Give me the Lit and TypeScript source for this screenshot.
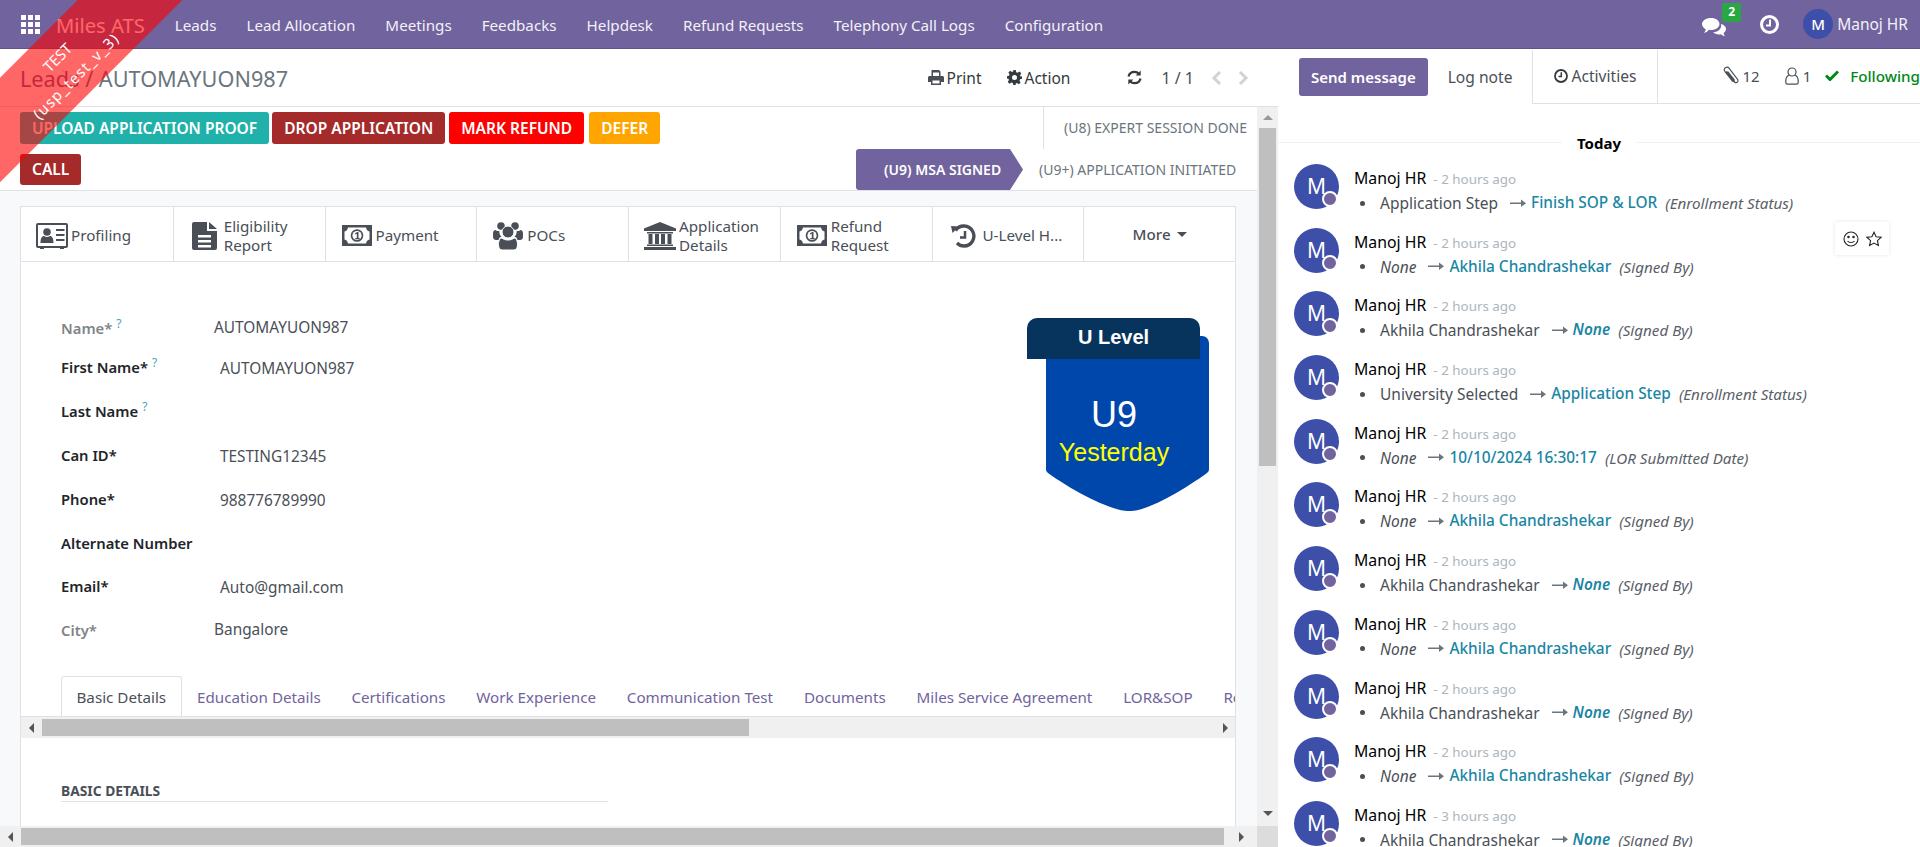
import { LitElement, html, css } from 'lit';
import { customElement } from 'lit/decorators.js';

const NAV = ['Leads', 'Lead Allocation', 'Meetings', 'Feedbacks', 'Helpdesk', 'Refund Requests', 'Telephony Call Logs', 'Configuration'];
const TABS = ['Education Details', 'Certifications', 'Work Experience', 'Communication Test', 'Documents', 'Miles Service Agreement', 'LOR&SOP', 'Resume'];

const moneyIcon = html`<svg width="30" height="21" viewBox="0 0 30 21"><rect width="30" height="21" fill="#4a4f57"/><path fill="#fff" d="M6 2.500H24c.5 2.500 1.500 3.500 3.500 4V14.500c-2 .5-3 1.500-3.500 4H6c-.5-2.500-1.500-3.500-3.500-4V6.500c2-.5 3-1.500 3.500-4z"/><circle cx="15" cy="10.500" r="6.300" fill="#4a4f57"/><circle cx="15" cy="10.500" r="4.600" fill="#fff"/><path fill="#4a4f57" d="M13 8.300l2.300-1.300h1.200v6h1.200v1.200h-4.400V13h1.500V8.700L13.300 9.400z"/></svg>`;

const ico = {
  apps: html`<svg width="19" height="19" viewBox="0 0 19 19" fill="#fff"><rect x="0" y="0" width="5" height="5"/><rect x="7" y="0" width="5" height="5"/><rect x="14" y="0" width="5" height="5"/><rect x="0" y="7" width="5" height="5"/><rect x="7" y="7" width="5" height="5"/><rect x="14" y="7" width="5" height="5"/><rect x="0" y="14" width="5" height="5"/><rect x="7" y="14" width="5" height="5"/><rect x="14" y="14" width="5" height="5"/></svg>`,
  chat: html`<svg width="24" height="22" viewBox="0 0 24 22" fill="#fff"><path d="M9 3c5 0 8.500 2.700 8.500 6s-3.500 6-8.500 6c-.8 0-1.500 0-2.200-.2C5.500 17 3.800 17.600 2 18c.8-1 1.500-2.200 1.700-3.800C1.500 13.100 0 11.200 0 9c0-3.300 4-6 9-6z"/><path d="M19 9c3 .8 5 2.700 5 5 0 1.600-1 3-2.500 4 .2 1.300.8 2.300 1.500 3.200-1.700-.3-3.100-1-4.200-2-.6.1-1.200.2-1.800.2-2.400 0-4.500-.8-5.800-2.100 5.300-.1 8.800-3.800 7.800-8.300z"/></svg>`,
  clock: html`<svg width="19" height="19" viewBox="0 0 19 19" fill="none" stroke="#fff"><circle cx="9.500" cy="9.500" r="8" stroke-width="3"/><path d="M10 4.500V10.500H6" stroke-width="2"/></svg>`,
  print: html`<svg width="16" height="15" viewBox="0 0 16 15" fill="#4a4f57"><path d="M3.500 0H11l1.500 1.500V6H11V2.500H5V6H3.500z"/><path d="M1.500 6h13c.8 0 1.500.7 1.500 1.500V12h-3v3H3v-3H0V7.500C0 6.700.7 6 1.500 6zM4.500 10.500v3h7v-3z" fill-rule="evenodd"/></svg>`,
  gear: html`<svg width="15" height="15" viewBox="0 0 24 24" fill="#343a40"><path fill-rule="evenodd" d="M10 0h4l.7 3.400 2.300 1 3-1.900 2.800 2.800-1.900 3 1 2.300L24 10v4l-3.100.7-1 2.300 1.900 3-2.800 2.800-3-1.900-2.300 1L14 24h-4l-.7-3.100-2.300-1-3 1.900-2.800-2.800 1.900-3-1-2.300L0 14v-4l3.100-.7 1-2.300-1.900-3 2.800-2.800 3 1.900 2.300-1zM12 8a4 4 0 100 8 4 4 0 000-8z"/></svg>`,
  refresh: html`<svg width="15" height="15" viewBox="0 0 15 15" fill="none" stroke="#343a40" stroke-width="2.200"><path d="M1.500 6.500C2.200 3.500 4.600 1.800 7.500 1.800c1.900 0 3.400.8 4.500 2"/><path d="M13.500 8.500c-.7 3-3.100 4.700-6 4.700-1.900 0-3.400-.8-4.500-2"/><path d="M13.700 0.500V5.500H8.700z" fill="#343a40" stroke="none"/><path d="M1.300 14.500V9.500H6.300z" fill="#343a40" stroke="none"/></svg>`,
  left: html`<svg width="11" height="16" viewBox="0 0 11 16" fill="none" stroke="#cfd2d6" stroke-width="3"><path d="M9 2L3 8l6 6"/></svg>`,
  right: html`<svg width="11" height="16" viewBox="0 0 11 16" fill="none" stroke="#cfd2d6" stroke-width="3"><path d="M2 2l6 6-6 6"/></svg>`,
  card: html`<svg width="32" height="26" viewBox="0 0 32 26" fill="#4a4f57"><path fill-rule="evenodd" d="M2 0h28a2 2 0 012 2v21a2 2 0 01-2 2h-2v1h-4v-1H8v1H4v-1H2a2 2 0 01-2-2V2a2 2 0 012-2zm0 2v21h28V2z"/><circle cx="11" cy="9" r="3.800"/><path d="M4.500 20c0-5 1.500-7 3.500-7 1 .8 2 1.100 3 1.100s2-.3 3-1.100c2 0 3.500 2 3.500 7z"/><rect x="20" y="6" width="8.500" height="2"/><rect x="20" y="11" width="8.500" height="2"/><rect x="20" y="16" width="8.500" height="2"/></svg>`,
  file: html`<svg width="25" height="28" viewBox="0 0 25 28" fill="#4a4f57"><path fill-rule="evenodd" d="M2 0h13v9h10v17a2 2 0 01-2 2H2a2 2 0 01-2-2V2a2 2 0 012-2zM6 13v2.500h13V13zm0 5v2.500h13V18zm0 5v2.500h13V23z"/><path d="M17 0l8 7h-8z"/></svg>`,
  money: moneyIcon,
  group: html`<svg width="30" height="28" viewBox="0 0 30 28" fill="#4a4f57"><circle cx="8" cy="4" r="3.800"/><circle cx="22" cy="4" r="3.800"/><path d="M0 11.500c0-2 1-3.500 2.500-3.500 1 .8 2.300 1.300 4 1.200-.4 2 .4 4 2 5.600C7 15 6 16 5.500 18H3c-2 0-3-1.500-3-3.500z"/><path d="M30 11.500c0-2-1-3.500-2.500-3.500-1 .8-2.300 1.300-4 1.200.4 2-.4 4-2 5.600 1.500.2 2.500 1.200 3 3.200H27c2 0 3-1.500 3-3.500z"/><circle cx="15" cy="10" r="6" stroke="#fff"/><path stroke="#fff" d="M9 16c1.600 1.500 3.600 2 6 2s4.400-.5 6-2c2.500 0 3.500 3 3.500 7 0 3-1.500 5-4 5h-11c-2.500 0-4-2-4-5 0-4 1-7 3.500-7z"/></svg>`,
  bank: html`<svg width="32" height="28" viewBox="0 0 32 28" fill="#4a4f57"><path d="M16 0l16 6.500V9H0V6.500z"/><rect x="3" y="10" width="26" height="1.500"/><rect x="4.500" y="12" width="4" height="10"/><rect x="11" y="12" width="4" height="10"/><rect x="17" y="12" width="4" height="10"/><rect x="23.500" y="12" width="4" height="10"/><rect x="3" y="22.500" width="26" height="1.500"/><rect x="0" y="25" width="32" height="3"/></svg>`,
  history: html`<svg width="25" height="24" viewBox="0 0 25 24" fill="none" stroke="#4a4f57"><path d="M4.500 6.500A10 10 0 1113 22c-3 0-5-1-7-3" stroke-width="3.400"/><path d="M0 2l8 .5-6.500 6.500z" fill="#4a4f57" stroke="none"/><path d="M14 7v6.500H9" stroke-width="2.500"/></svg>`,
  clip: html`<svg width="17" height="19" viewBox="0 0 17 19" fill="none" stroke="#495057" stroke-width="1.200"><path d="M3 5.500l8.500 10.500c1.300 1.500 4 .2 3.500-2L6 2.200C4.500.4 1.500 1.200 1.200 3.500c0 1 .5 1.800 1 2.500l7.300 9c.7.800 2.200 0 1.700-1.200L4.500 5.500"/></svg>`,
  user: html`<svg width="14" height="18" viewBox="0 0 14 18" fill="none" stroke="#495057" stroke-width="1.200"><circle cx="7" cy="5" r="4"/><path d="M4 8C2 9 .8 11 .8 14v1.500c0 1 .7 1.700 1.700 1.700h9c1 0 1.700-.7 1.700-1.700V14c0-3-1.200-5-3.200-6"/></svg>`,
  check: html`<svg width="14" height="11" viewBox="0 0 14 11" fill="none" stroke="#008818" stroke-width="3"><path d="M1 5.500l4 4L13 1.500"/></svg>`,
  clockSmall: html`<svg width="14" height="14" viewBox="0 0 14 14" fill="none" stroke="#343a40"><circle cx="7" cy="7" r="6" stroke-width="1.800"/><path d="M7.300 3.200V7.500H4.500" stroke-width="1.500"/></svg>`,
  arrow: html`<svg width="16" height="9" viewBox="0 0 16 9" fill="#6c757d"><rect x="0" y="3.500" width="12" height="1.500"/><path d="M11 0.500l5 3.800-5 3.800z"/></svg>`,
  smile: html`<svg width="16" height="16" viewBox="0 0 16 16" fill="none" stroke="#212529" stroke-width="1.100"><circle cx="8" cy="8" r="7"/><circle cx="5.500" cy="6" r=".7" fill="#212529"/><circle cx="10.500" cy="6" r=".7" fill="#212529"/><path d="M4.500 10c1.500 2 5.500 2 7 0"/></svg>`,
  star: html`<svg width="16" height="16" viewBox="0 0 16 16" fill="none" stroke="#212529" stroke-width="1.100"><path d="M8 1.200l2.100 4.500 4.900.6-3.600 3.300 1 4.900L8 12.100l-4.400 2.400 1-4.900L1 6.300l4.900-.6z"/></svg>`,
};

const tri = (dir: string) => html`<span class="tri ${dir}"></span>`;

const MESSAGES = [
  { from: 'Application Step', to: 'Finish SOP & LOR', field: 'Enrollment Status' },
  { from: null, to: 'Akhila Chandrashekar', field: 'Signed By' },
  { from: 'Akhila Chandrashekar', to: null, field: 'Signed By' },
  { from: 'University Selected', to: 'Application Step', field: 'Enrollment Status' },
  { from: null, to: '10/10/2024 16:30:17', field: 'LOR Submitted Date' },
  { from: null, to: 'Akhila Chandrashekar', field: 'Signed By' },
  { from: 'Akhila Chandrashekar', to: null, field: 'Signed By' },
  { from: null, to: 'Akhila Chandrashekar', field: 'Signed By' },
  { from: 'Akhila Chandrashekar', to: null, field: 'Signed By' },
  { from: null, to: 'Akhila Chandrashekar', field: 'Signed By' },
  { from: 'Akhila Chandrashekar', to: null, field: 'Signed By', time: '3 hours ago' },
];

const STATS = [
  { icon: ico.card, label: 'Profiling' },
  { icon: ico.file, label: 'Eligibility Report', two: true },
  { icon: ico.money, label: 'Payment' },
  { icon: ico.group, label: 'POCs' },
  { icon: ico.bank, label: 'Application Details', two: true },
  { icon: ico.money, label: 'Refund Request', two: true },
  { icon: ico.history, label: 'U-Level H...' },
];

const FIELDS = [
  { label: 'First Name*', help: true, value: 'AUTOMAYUON987' },
  { label: 'Last Name', help: true, value: '' },
  { label: 'Can ID*', value: 'TESTING12345' },
  { label: 'Phone*', value: '988776789990' },
  { label: 'Alternate Number', value: '' },
  { label: 'Email*', value: 'Auto@gmail.com' },
];

@customElement('app-root')
export class AppRoot extends LitElement {
  static styles = css`
    :host {
      display: block;
      position: relative;
      width: 1920px;
      height: 847px;
      overflow: hidden;
      font-family: 'Noto Sans', sans-serif;
      font-size: 15.2px;
      color: #4a4f57;
      background: #fff;
    }
    .ribbon {
      position: absolute;
      left: -85px;
      top: 28px;
      width: 300px;
      height: 74px;
      transform: rotate(-45deg);
      background: rgba(255, 0, 0, 0.6);
      color: #fff;
      font-size: 15px;
      line-height: 26px;
      display: flex;
      flex-direction: column;
      align-items: center;
      justify-content: center;
      z-index: 10;
      padding-top: 3px;
      box-sizing: border-box;
    }
    .ribbon span + span {
      letter-spacing: 1.2px;
    }
    .nav {
      height: 49px;
      box-sizing: border-box;
      background: #71639e;
      border-bottom: 1px solid #5f5389;
      display: flex;
      align-items: center;
      color: #fff;
      padding-left: 21px;
    }
    .brand {
      font-size: 20.200px;
      margin: 2px 30px 0 16px;
    }
    .nav-item {
      font-size: 15.200px;
      color: #f3f1f7;
      margin: 2px 30px 0 0;
    }
    .nav-right {
      margin-left: auto;
      display: flex;
      align-items: center;
      padding-right: 12px;
    }
    .chat {
      position: relative;
      width: 24px;
      height: 22px;
      margin-right: 34px;
      margin-top: 4px;
    }
    .badge {
      position: absolute;
      left: 20px;
      top: -12px;
      width: 19px;
      height: 19px;
      border-radius: 2px;
      background: #28a745;
      font-size: 12px;
      font-weight: 700;
      line-height: 18px;
      text-align: center;
    }
    .nav-clock {
      margin-right: 24px;
      display: flex;
    }
    .avatar-top {
      width: 30px;
      height: 30px;
      border-radius: 50%;
      background: #3d4fa8;
      text-align: center;
      line-height: 30px;
      font-size: 15px;
      font-weight: 500;
      margin-right: 4px;
    }
    .nav-user {
      font-size: 15.500px;
      color: #f3f1f7;
    }
    .main {
      display: flex;
      height: 798px;
    }
    .left {
      width: 1278px;
      flex: none;
      display: flex;
      flex-direction: column;
    }
    .cp {
      height: 58px;
      flex: none;
      box-sizing: border-box;
      display: flex;
      align-items: center;
      padding: 0 29px 0 20px;
      border-bottom: 1px solid #dee2e6;
    }
    .crumb {
      font-size: 21.700px;
      color: #6c757d;
      flex: 1;
      margin-top: 1px;
    }
    .crumb a {
      color: #71639e;
    }
    .cp-btn {
      display: flex;
      align-items: center;
      gap: 3px;
      font-size: 15.500px;
      color: #343a40;
      margin-right: 25px;
    }
    .cp-btn.last {
      margin-right: 57px;
    }
    .pager {
      font-size: 16px;
      color: #4a4f57;
      margin: 0 17px 0 19px;
    }
    .pager-arrows {
      display: flex;
      gap: 16px;
    }
    .body {
      flex: 1;
      min-height: 0;
      display: grid;
      grid-template-columns: 1257px 21px;
      grid-template-rows: 719px 21px;
    }
    .content {
      overflow: hidden;
      background: #f8f9fa;
    }
    .statusbar {
      height: 84px;
      box-sizing: border-box;
      background: #fff;
      border-bottom: 1px solid #dee2e6;
      display: flex;
      justify-content: space-between;
    }
    .actions {
      width: 650px;
      padding: 5px 0 0 20px;
      display: flex;
      flex-wrap: wrap;
      align-content: flex-start;
      column-gap: 3px;
      row-gap: 10px;
    }
    .act {
      height: 32px;
      padding: 0 12px;
      border-radius: 3px;
      color: #fff;
      font-size: 15.500px;
      font-weight: 600;
      line-height: 33px;
      white-space: nowrap;
    }
    .teal { background: #20b2aa; }
    .brown { background: #a52a2a; }
    .red { background: #f00; margin-left: 1px; }
    .orange { background: #ffa500; margin-left: 2px; }
    .call { height: 31px; line-height: 31px; }
    .stages {
      display: flex;
      flex-direction: column;
      align-items: flex-end;
      font-size: 14px;
      color: #6c757d;
    }
    .st-top {
      width: 214px;
      height: 42px;
      box-sizing: border-box;
      border-left: 1px solid #dee2e6;
      padding-left: 20px;
      line-height: 42px;
      white-space: nowrap;
    }
    .st-row {
      display: flex;
      height: 41px;
      align-items: center;
    }
    .st-active {
      width: 167px;
      height: 41px;
      box-sizing: border-box;
      background: #71639e;
      color: #fff;
      font-weight: 600;
      line-height: 41px;
      padding-left: 28px;
      border-radius: 3px 0 0 3px;
      clip-path: polygon(0 0, 154px 0, 100% 50%, 154px 100%, 0 100%);
      white-space: nowrap;
    }
    .st-next {
      width: 234px;
      padding-left: 16px;
      box-sizing: border-box;
      white-space: nowrap;
    }
    .sheet-wrap {
      padding: 15px 21px 0 20px;
    }
    .sheet {
      background: #fff;
      border: 1px solid #dee2e6;
      height: 700px;
      box-sizing: border-box;
    }
    .stats {
      display: flex;
      height: 55px;
      box-sizing: border-box;
      border-bottom: 1px solid #dee2e6;
    }
    .stat {
      flex: 0 0 12.500%;
      box-sizing: border-box;
      min-width: 0;
      display: flex;
      align-items: center;
      padding: 3px 0 0 13px;
      border-left: 1px solid #dee2e6;
      line-height: 19px;
    }
    .stat:first-child { border-left: 0; }
    .stat-icon {
      width: 36px;
      flex: none;
      display: flex;
      justify-content: center;
      margin-right: 1px;
    }
    .stat-text.two { width: 90px; }
    .more {
      justify-content: center;
      padding: 0;
      font-weight: 500;
      gap: 6px;
      color: #4a4f57;
    }
    .caret {
      width: 0;
      height: 0;
      border-left: 5px solid transparent;
      border-right: 5px solid transparent;
      border-top: 5px solid #4a4f57;
    }
    .top {
      display: flex;
      justify-content: space-between;
      height: 414px;
      box-sizing: border-box;
      padding: 56px 25px 0 40px;
    }
    .row {
      display: flex;
      height: 43.900px;
      line-height: 20px;
    }
    .row.plain { height: 39px; }
    .label {
      width: 159px;
      flex: none;
      font-size: 14.800px;
      font-weight: 600;
      color: #212529;
    }
    .plain .label {
      width: 153px;
      color: #808489;
    }
    .value {
      color: #4a4f57;
      font-size: 15.400px;
      margin-top: 2px;
    }
    .plain .value { margin-top: 0; }
    sup {
      color: #4ba3b8;
      font-size: 12px;
      line-height: 0;
      margin-left: 4px;
      font-weight: 400;
    }
    .shield {
      position: relative;
      width: 183px;
      height: 193px;
      font-family: 'Liberation Sans', sans-serif;
      text-align: center;
    }
    .shield svg {
      position: absolute;
      left: 19px;
      top: 18px;
    }
    .shield-head {
      position: absolute;
      left: 0;
      top: 0;
      width: 173px;
      height: 41px;
      box-sizing: border-box;
      border-radius: 10px 10px 0 0;
      background: #07345c;
      color: #fff;
      font-size: 20px;
      font-weight: 700;
      line-height: 38px;
    }
    .shield-u {
      position: absolute;
      left: 19px;
      width: 136px;
      top: 75px;
      color: #fff;
      font-size: 36px;
      line-height: 44px;
    }
    .shield-y {
      position: absolute;
      left: 19px;
      width: 136px;
      top: 120px;
      color: #ff0;
      font-size: 25px;
      line-height: 29px;
    }
    .tabs {
      display: flex;
      height: 41px;
      box-sizing: border-box;
      padding-left: 40px;
      border-bottom: 1px solid #dee2e6;
      overflow: hidden;
      white-space: nowrap;
    }
    .tab {
      flex: none;
      padding: 0 14.400px;
      line-height: 40px;
      color: #71639e;
      border: 1px solid transparent;
      border-bottom: 0;
      height: 41px;
      box-sizing: border-box;
    }
    .tab.active {
      color: #4a4f57;
      background: #fff;
      border-color: #dee2e6;
      border-radius: 3px 3px 0 0;
      padding: 0 14.500px;
    }
    .sbar {
      background: #f0f0f0;
      display: flex;
      align-items: center;
    }
    .sbar.h {
      height: 21px;
    }
    .thumb {
      background: #bfbfbf;
      height: 17px;
    }
    .tri {
      width: 0;
      height: 0;
      flex: none;
      display: block;
    }
    .tri.l {
      border-top: 5px solid transparent;
      border-bottom: 5px solid transparent;
      border-right: 5px solid #555;
    }
    .tri.r {
      border-top: 5px solid transparent;
      border-bottom: 5px solid transparent;
      border-left: 5px solid #555;
    }
    .tri.u {
      border-left: 5px solid transparent;
      border-right: 5px solid transparent;
      border-bottom: 5px solid #999;
    }
    .tri.d {
      border-left: 5px solid transparent;
      border-right: 5px solid transparent;
      border-top: 5px solid #555;
    }
    .tabs-bar {
      justify-content: flex-start;
      padding-left: 8px;
    }
    .tabs-bar .thumb {
      width: 707px;
      margin-left: 8px;
    }
    .tabs-bar .tri.r {
      margin-left: auto;
      margin-right: 7px;
    }
    .section {
      padding: 44px 0 0 40px;
    }
    .section h4 {
      width: 547px;
      margin: 0;
      font-size: 13.800px;
      font-weight: 700;
      line-height: 18px;
      color: #4a4f57;
      padding-bottom: 1px;
      border-bottom: 1px solid #dee2e6;
    }
    .vbar {
      background: #f0f0f0;
      display: flex;
      flex-direction: column;
      align-items: center;
      justify-content: space-between;
      padding-top: 8px;
      padding-bottom: 10px;
      box-sizing: border-box;
    }
    .vtrack {
      width: 17px;
      flex: 1;
      margin-top: 8px;
    }
    .vtrack div {
      width: 17px;
      height: 338px;
      background: #bfbfbf;
    }
    .main-h {
      padding-left: 8px;
    }
    .main-h .thumb {
      width: 1203px;
      margin-left: 8px;
    }
    .main-h .tri.r {
      margin-left: 15px;
    }
    .corner {
      background: #dcdcdc;
    }
    .chatter {
      flex: 1;
      min-width: 0;
    }
    .ch-head {
      display: flex;
      height: 54px;
      box-sizing: border-box;
      align-items: stretch;
      padding-left: 21px;
      margin-top: 1px;
    }
    .send {
      align-self: flex-start;
      margin-top: 8px;
      height: 38px;
      width: 129px;
      border-radius: 3px;
      background: #71639e;
      color: #fff;
      font-weight: 600;
      font-size: 15px;
      line-height: 38px;
      text-align: center;
    }
    .log {
      width: 105px;
      padding-top: 8px;
      line-height: 38px;
      text-align: center;
      box-sizing: border-box;
      font-size: 15.600px;
    }
    .ch-rest {
      flex: 1;
      display: flex;
      border-bottom: 1px solid #dee2e6;
      border-left: 1px solid #dee2e6;
    }
    .activities {
      width: 125px;
      box-sizing: border-box;
      border-right: 1px solid #dee2e6;
      display: flex;
      align-items: center;
      justify-content: center;
      gap: 3px;
      padding-bottom: 2px;
      font-size: 15.600px;
    }
    .ch-right {
      flex: 1;
      display: flex;
      align-items: center;
      padding: 0 0 2px 65px;
      white-space: nowrap;
    }
    .count {
      display: flex;
      align-items: center;
      gap: 2px;
      font-size: 15px;
    }
    .count.users { margin-left: 25px; gap: 4px; }
    .following {
      display: flex;
      align-items: center;
      gap: 11px;
      color: #008818;
      margin-left: 14px;
      font-weight: 500;
    }
    .today {
      height: 20px;
      margin-top: 29px;
      position: relative;
      text-align: center;
      font-weight: 700;
      color: #000;
      line-height: 20px;
      font-size: 15px;
    }
    .today::before {
      content: '';
      position: absolute;
      left: 0;
      right: 0;
      top: 9px;
      border-top: 1px solid #f2f2f2;
    }
    .today span {
      position: relative;
      background: #fff;
      padding: 0 15px;
    }
    .msgs {
      padding-top: 11px;
      position: relative;
    }
    .msg {
      height: 63.700px;
      display: flex;
      padding-left: 16px;
    }
    .avatar {
      position: relative;
      width: 45px;
      height: 45px;
      flex: none;
      border-radius: 50%;
      background: #3d4fa8;
      color: #fff;
      font-size: 21px;
      line-height: 45px;
      padding-left: 13px;
      box-sizing: border-box;
    }
    .dot {
      position: absolute;
      right: 1px;
      bottom: 2px;
      width: 12px;
      height: 12px;
      border: 2.500px solid #fff;
      border-radius: 50%;
      background: #71639e;
    }
    .msg-body {
      margin-left: 15px;
      white-space: nowrap;
    }
    .msg-top {
      line-height: 20px;
      color: #000;
      font-size: 15.800px;
      margin-top: 4px;
    }
    .msg-top small {
      color: #adb5bd;
      font-size: 13.400px;
      margin-left: 3px;
    }
    .change {
      display: flex;
      align-items: center;
      line-height: 20px;
      margin-top: 4px;
      font-size: 15.500px;
      color: #4a4f57;
    }
    .bullet {
      width: 5px;
      height: 5px;
      border-radius: 50%;
      background: #4a4f57;
      margin: 0 15px 0 6px;
    }
    .change svg {
      margin: 0 5px 0 12px;
    }
    .to {
      color: #1a86a4;
      font-weight: 500;
      font-size: 15.400px;
    }
    i.to { font-weight: 600; }
    .field {
      font-style: italic;
      margin-left: 8px;
      font-size: 15.200px;
      color: #5a6068;
    }
    .hover {
      position: absolute;
      left: 557px;
      top: 69px;
      width: 54px;
      height: 33px;
      box-sizing: border-box;
      background: #fff;
      box-shadow: 0 0 4px rgba(0, 0, 0, 0.1);
      display: flex;
      align-items: center;
      justify-content: center;
      gap: 7px;
    }
  `;

  private _msg(m: any) {
    return html`<div class="msg">
      <div class="avatar">M<span class="dot"></span></div>
      <div class="msg-body">
        <div class="msg-top">Manoj HR <small>- ${m.time ?? '2 hours ago'}</small></div>
        <div class="change">
          <span class="bullet"></span>
          ${m.from ? html`<span>${m.from}</span>` : html`<i>None</i>`}
          ${ico.arrow}
          ${m.to ? html`<span class="to">${m.to}</span>` : html`<i class="to">None</i>`}
          <span class="field">(${m.field})</span>
        </div>
      </div>
    </div>`;
  }

  protected render() {
    return html`
      <div class="ribbon"><span>TEST</span><span>(usp_test_v_3)</span></div>
      <div class="nav">
        ${ico.apps}
        <span class="brand">Miles ATS</span>
        ${NAV.map((n) => html`<span class="nav-item">${n}</span>`)}
        <div class="nav-right">
          <div class="chat">${ico.chat}<span class="badge">2</span></div>
          <span class="nav-clock">${ico.clock}</span>
          <span class="avatar-top">M</span>
          <span class="nav-user">Manoj HR</span>
        </div>
      </div>
      <div class="main">
        <div class="left">
          <div class="cp">
            <div class="crumb"><a>Leads</a> / AUTOMAYUON987</div>
            <span class="cp-btn">${ico.print}Print</span>
            <span class="cp-btn last">${ico.gear}Action</span>
            ${ico.refresh}
            <span class="pager">1 / 1</span>
            <span class="pager-arrows">${ico.left}${ico.right}</span>
          </div>
          <div class="body">
            <div class="content">
              <div class="statusbar">
                <div class="actions">
                  <span class="act teal">UPLOAD APPLICATION PROOF</span>
                  <span class="act brown">DROP APPLICATION</span>
                  <span class="act red">MARK REFUND</span>
                  <span class="act orange">DEFER</span>
                  <span class="act brown call">CALL</span>
                </div>
                <div class="stages">
                  <div class="st-top">(U8) EXPERT SESSION DONE</div>
                  <div class="st-row">
                    <div class="st-active">(U9) MSA SIGNED</div>
                    <div class="st-next">(U9+) APPLICATION INITIATED</div>
                  </div>
                </div>
              </div>
              <div class="sheet-wrap">
                <div class="sheet">
                  <div class="stats">
                    ${STATS.map(
                      (s) => html`<div class="stat">
                        <span class="stat-icon">${s.icon}</span>
                        <span class="stat-text ${s.two ? 'two' : ''}">${s.label}</span>
                      </div>`,
                    )}
                    <div class="stat more">More <span class="caret"></span></div>
                  </div>
                  <div class="top">
                    <div>
                      <div class="row plain">
                        <span class="label">Name*<sup>?</sup></span><span class="value">AUTOMAYUON987</span>
                      </div>
                      ${FIELDS.map(
                        (f) => html`<div class="row">
                          <span class="label">${f.label}${f.help ? html`<sup>?</sup>` : ''}</span>
                          <span class="value">${f.value}</span>
                        </div>`,
                      )}
                      <div class="row plain">
                        <span class="label">City*</span><span class="value">Bangalore</span>
                      </div>
                    </div>
                    <div class="shield">
                      <svg width="164" height="175" viewBox="0 0 164 175">
                        <path
                          fill="#0047ab"
                          d="M0 0H156a7 7 0 017 7V133c0 2-1 3-2 4-25 18-60 38-76 38h-3C65 175 27 155 2 137c-1-1-2-2-2-4z"
                        />
                      </svg>
                      <div class="shield-head">U Level</div>
                      <div class="shield-u">U9</div>
                      <div class="shield-y">Yesterday</div>
                    </div>
                  </div>
                  <div class="tabs">
                    <span class="tab active">Basic Details</span>
                    ${TABS.map((t) => html`<span class="tab">${t}</span>`)}
                  </div>
                  <div class="sbar h tabs-bar">${tri('l')}<div class="thumb"></div>${tri('r')}</div>
                  <div class="section"><h4>BASIC DETAILS</h4></div>
                </div>
              </div>
            </div>
            <div class="vbar">
              ${tri('u')}
              <div class="vtrack"><div></div></div>
              ${tri('d')}
            </div>
            <div class="sbar h main-h">${tri('l')}<div class="thumb"></div>${tri('r')}</div>
            <div class="corner"></div>
          </div>
        </div>
        <div class="chatter">
          <div class="ch-head">
            <div class="send">Send message</div>
            <div class="log">Log note</div>
            <div class="ch-rest">
              <div class="activities">${ico.clockSmall}Activities</div>
              <div class="ch-right">
                <span class="count">${ico.clip}12</span>
                <span class="count users">${ico.user}1</span>
                <span class="following">${ico.check}Following</span>
              </div>
            </div>
          </div>
          <div class="today"><span>Today</span></div>
          <div class="msgs">
            ${MESSAGES.map((m) => this._msg(m))}
            <div class="hover">${ico.smile}${ico.star}</div>
          </div>
        </div>
      </div>
    `;
  }
}
